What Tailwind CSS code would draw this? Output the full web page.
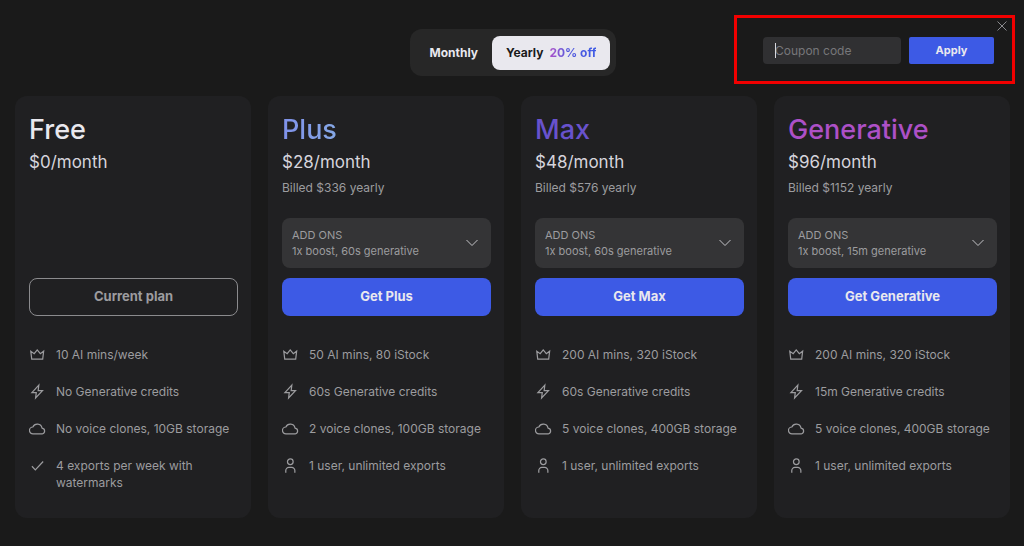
<!DOCTYPE html>
<html lang="en">
<head>
  <meta charset="UTF-8" />
  <meta name="viewport" content="width=device-width, initial-scale=1.0" />
  <title>Plans</title>
  <script src="https://cdn.jsdelivr.net/npm/@tailwindcss/browser@4"></script>
</head>
<body class="bg-[#1a1a1a] text-[#9c9c9f] font-['Inter',sans-serif] min-h-screen">
  <!-- icons -->
  <svg class="hidden">
    <symbol id="crown" viewBox="0 0 18 18"><path d="M2.900 14h11.600l1-8.500-3.500 2.600L8.700 4.200 5.500 8.100 1.900 5.500z" /></symbol>
    <symbol id="bolt" viewBox="0 0 18 18"><path d="M10.400 2.200 3.100 10.100h4.600L7 15.900l7.300-7.900H9.700z" /></symbol>
    <symbol id="cloud" viewBox="0 0 18 18"><path d="M4.300 14.800a3.700 3.700 0 0 1-.2-7.400A5.100 5.100 0 0 1 13.800 8.500a3.200 3.200 0 0 1 .2 6.300z" /></symbol>
    <symbol id="check" viewBox="0 0 18 18"><path d="m3.100 9.800 3.600 3.800 8.300-8.800" /></symbol>
    <symbol id="user" viewBox="0 0 18 18"><circle cx="8.800" cy="5" r="3" /><path d="M4 16.600v-2.200a3.300 3.300 0 0 1 3.300-3.300h3a3.300 3.300 0 0 1 3.300 3.300v2.200" /></symbol>
    <symbol id="chevron" viewBox="0 0 14 14"><path d="m1.500 4 5.500 5.500 5.500-5.500" /></symbol>
  </svg>

  <header class="grid grid-cols-[1fr_auto_1fr] items-center pt-[15px] pl-[11px] pr-[9px]">
    <div class="col-start-2 flex items-center bg-[#272727] rounded-xl h-[47px] px-1.5 mt-1.5 text-xs font-bold">
      <button type="button" class="h-[34px] px-3.5 text-[#e9e8ee]">Monthly</button>
      <button type="button" class="h-[34px] px-3.5 rounded-lg bg-[#e9e8ee] text-[#1a1a1a] flex items-center gap-1.5">
        Yearly
        <span class="bg-linear-to-r from-[#b04fc8] via-[#5458dc] via-40% to-[#3d5ae5] bg-clip-text text-transparent">20% off</span>
      </button>
    </div>

    <form class="justify-self-end relative w-[281px] h-[69px] border-3 border-[#f20000] flex items-center gap-2 pt-0.5 pl-[26px] pr-[18px]">
      <div class="relative flex-1">
        <input type="text" name="coupon" aria-label="Coupon code" placeholder="Coupon code" class="block w-full h-[27px] px-3 rounded bg-[#303032] text-xs text-[#e9e8ee] placeholder:text-[#77777a] focus:outline-none" />
        <span class="absolute left-3 top-1.5 w-px h-[15px] bg-[#d8d8dd]"></span>
      </div>
      <button type="submit" class="w-[85px] h-[27px] rounded-xs bg-[#3d5ae5] text-[#e9e8ee] text-[11px] font-bold">Apply</button>
      <button type="button" aria-label="Close" class="absolute right-1 top-0.5">
        <svg class="size-3 fill-none stroke-[#8a8a8d] stroke-1" viewBox="0 0 12 12"><path d="m1.500 1.500 9 9m0-9-9 9" /></svg>
      </button>
    </form>
  </header>

  <main class="grid grid-cols-4 gap-[17px] pl-[15px] pr-[14px] pt-3 pb-7">
    <section class="bg-[#202022] rounded-xl pt-4 pl-[14px] pr-[13px] pb-[27px]">
      <div class="min-h-[156px]">
        <h2 class="text-[27px] leading-9 font-medium text-[#e9e8ee]">Free</h2>
        <p class="text-[17px] leading-7 text-[#d6d4dc]">$0/month</p>
      </div>
      <button type="button" class="block w-full h-[38px] mt-2.5 rounded-lg border border-[#8b8b8e] text-[13px] font-bold">Current plan</button>
      <ul class="mt-[30px] space-y-5 text-xs leading-[17px]">
        <li class="flex gap-2.5"><svg class="size-[17px] shrink-0 fill-none stroke-current stroke-[1.3]"><use href="#crown" /></svg>10 AI mins/week</li>
        <li class="flex gap-2.5"><svg class="size-[17px] shrink-0 fill-none stroke-current stroke-[1.3]"><use href="#bolt" /></svg>No Generative credits</li>
        <li class="flex gap-2.5"><svg class="size-[17px] shrink-0 fill-none stroke-current stroke-[1.3]"><use href="#cloud" /></svg>No voice clones, 10GB storage</li>
        <li class="flex gap-2.5"><svg class="size-[17px] shrink-0 fill-none stroke-current stroke-[1.3]"><use href="#check" /></svg>4 exports per week with watermarks</li>
      </ul>
    </section>

    <section class="bg-[#202022] rounded-xl pt-4 pl-[14px] pr-[13px] pb-[27px]">
      <div class="min-h-[106px]">
        <h2 class="text-[27px] leading-9 font-medium"><span class="bg-linear-to-r from-[#7f91ea] to-[#86a8e6] bg-clip-text text-transparent">Plus</span></h2>
        <p class="text-[17px] leading-7 text-[#d6d4dc]">$28/month</p>
        <p class="text-xs leading-6">Billed $336 yearly</p>
      </div>
      <button type="button" aria-haspopup="listbox" class="flex items-center justify-between w-full h-[50px] pl-2.5 pr-3 rounded-lg bg-[#343436] text-left text-[11px] leading-4">
        <span>ADD ONS<br />1x boost, 60s generative</span>
        <svg class="size-[14px] fill-none stroke-[#c4c4c8]"><use href="#chevron" /></svg>
      </button>
      <button type="button" class="block w-full h-[38px] mt-2.5 rounded-lg bg-[#3d5ae5] text-[#e9e8ee] text-[13px] font-bold">Get Plus</button>
      <ul class="mt-[30px] space-y-5 text-xs leading-[17px]">
        <li class="flex gap-2.5"><svg class="size-[17px] shrink-0 fill-none stroke-current stroke-[1.3]"><use href="#crown" /></svg>50 AI mins, 80 iStock</li>
        <li class="flex gap-2.5"><svg class="size-[17px] shrink-0 fill-none stroke-current stroke-[1.3]"><use href="#bolt" /></svg>60s Generative credits</li>
        <li class="flex gap-2.5"><svg class="size-[17px] shrink-0 fill-none stroke-current stroke-[1.3]"><use href="#cloud" /></svg>2 voice clones, 100GB storage</li>
        <li class="flex gap-2.5"><svg class="size-[17px] shrink-0 fill-none stroke-current stroke-[1.3]"><use href="#user" /></svg>1 user, unlimited exports</li>
      </ul>
    </section>

    <section class="bg-[#202022] rounded-xl pt-4 pl-[14px] pr-[13px] pb-[27px]">
      <div class="min-h-[106px]">
        <h2 class="text-[27px] leading-9 font-medium"><span class="text-[#6852cd]">Max</span></h2>
        <p class="text-[17px] leading-7 text-[#d6d4dc]">$48/month</p>
        <p class="text-xs leading-6">Billed $576 yearly</p>
      </div>
      <button type="button" aria-haspopup="listbox" class="flex items-center justify-between w-full h-[50px] pl-2.5 pr-3 rounded-lg bg-[#343436] text-left text-[11px] leading-4">
        <span>ADD ONS<br />1x boost, 60s generative</span>
        <svg class="size-[14px] fill-none stroke-[#c4c4c8]"><use href="#chevron" /></svg>
      </button>
      <button type="button" class="block w-full h-[38px] mt-2.5 rounded-lg bg-[#3d5ae5] text-[#e9e8ee] text-[13px] font-bold">Get Max</button>
      <ul class="mt-[30px] space-y-5 text-xs leading-[17px]">
        <li class="flex gap-2.5"><svg class="size-[17px] shrink-0 fill-none stroke-current stroke-[1.3]"><use href="#crown" /></svg>200 AI mins, 320 iStock</li>
        <li class="flex gap-2.5"><svg class="size-[17px] shrink-0 fill-none stroke-current stroke-[1.3]"><use href="#bolt" /></svg>60s Generative credits</li>
        <li class="flex gap-2.5"><svg class="size-[17px] shrink-0 fill-none stroke-current stroke-[1.3]"><use href="#cloud" /></svg>5 voice clones, 400GB storage</li>
        <li class="flex gap-2.5"><svg class="size-[17px] shrink-0 fill-none stroke-current stroke-[1.3]"><use href="#user" /></svg>1 user, unlimited exports</li>
      </ul>
    </section>

    <section class="bg-[#202022] rounded-xl pt-4 pl-[14px] pr-[13px] pb-[27px]">
      <div class="min-h-[106px]">
        <h2 class="text-[27px] leading-9 font-medium"><span class="text-[#ad50c7]">Generative</span></h2>
        <p class="text-[17px] leading-7 text-[#d6d4dc]">$96/month</p>
        <p class="text-xs leading-6">Billed $1152 yearly</p>
      </div>
      <button type="button" aria-haspopup="listbox" class="flex items-center justify-between w-full h-[50px] pl-2.5 pr-3 rounded-lg bg-[#343436] text-left text-[11px] leading-4">
        <span>ADD ONS<br />1x boost, 15m generative</span>
        <svg class="size-[14px] fill-none stroke-[#c4c4c8]"><use href="#chevron" /></svg>
      </button>
      <button type="button" class="block w-full h-[38px] mt-2.5 rounded-lg bg-[#3d5ae5] text-[#e9e8ee] text-[13px] font-bold">Get Generative</button>
      <ul class="mt-[30px] space-y-5 text-xs leading-[17px]">
        <li class="flex gap-2.5"><svg class="size-[17px] shrink-0 fill-none stroke-current stroke-[1.3]"><use href="#crown" /></svg>200 AI mins, 320 iStock</li>
        <li class="flex gap-2.5"><svg class="size-[17px] shrink-0 fill-none stroke-current stroke-[1.3]"><use href="#bolt" /></svg>15m Generative credits</li>
        <li class="flex gap-2.5"><svg class="size-[17px] shrink-0 fill-none stroke-current stroke-[1.3]"><use href="#cloud" /></svg>5 voice clones, 400GB storage</li>
        <li class="flex gap-2.5"><svg class="size-[17px] shrink-0 fill-none stroke-current stroke-[1.3]"><use href="#user" /></svg>1 user, unlimited exports</li>
      </ul>
    </section>
  </main>
</body>
</html>
